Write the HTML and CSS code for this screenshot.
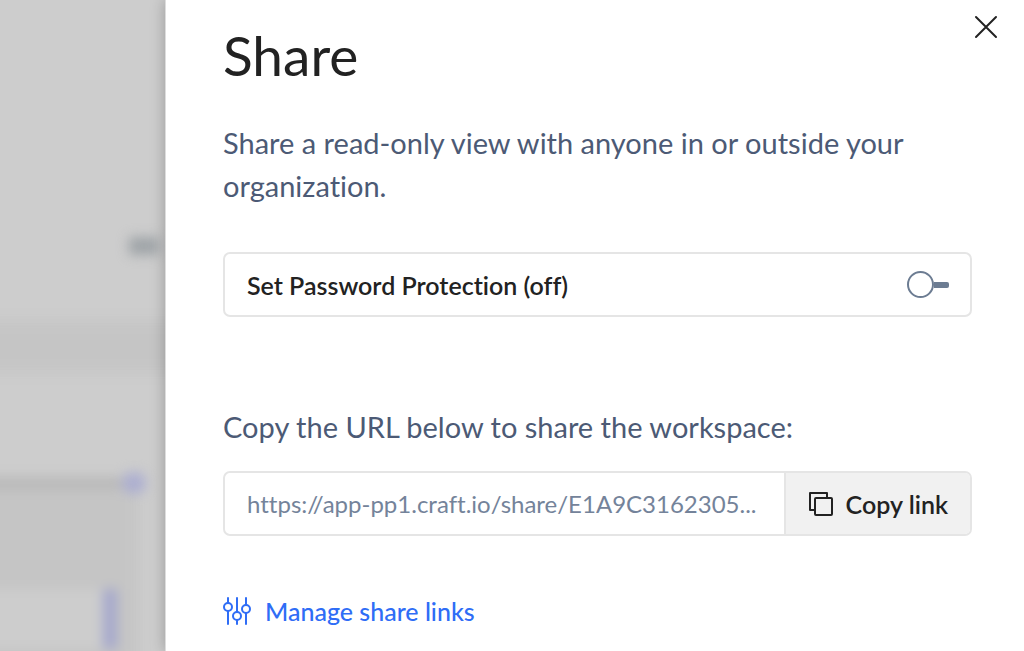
FILE: index.html
```html
<!DOCTYPE html>
<html lang="en">
<head>
    <meta charset="UTF-8">
    <meta name="viewport" content="width=device-width, initial-scale=1.0">
    <title>Share</title>
    <link rel="stylesheet" href="styles.css">
</head>
<body>
    <div class="layout">
        <div class="backdrop" aria-hidden="true">
            <div class="workspace">
                <div class="toolbar"><span class="chip"></span></div>
                <div class="band"></div>
                <div class="blank"></div>
                <div class="slider"><span class="track"></span><span class="knob"></span></div>
                <div class="board">
                    <div class="card"></div>
                </div>
            </div>
        </div>

        <main class="panel">
            <button class="close" type="button" aria-label="Close">
                <svg width="24" height="24" viewBox="0 0 24 24" fill="none" stroke="#222" stroke-width="2" stroke-linecap="round">
                    <path d="M2 2l20 20M22 2L2 22"/>
                </svg>
            </button>
            <h1>Share</h1>
            <p class="intro">Share a read-only view with anyone in or outside your organization.</p>

            <div class="box password">
                <label for="password">Set Password Protection (off)</label>
                <input type="checkbox" id="password" class="switch">
            </div>

            <label class="url-label" for="shareUrl">Copy the URL below to share the workspace:</label>
            <div class="box url-row">
                <input type="text" id="shareUrl" value="https://app-pp1.craft.io/share/E1A9C3162305..." readonly>
                <button class="copy" type="button">
                    <svg width="24" height="24" viewBox="0 0 24 24" fill="none" stroke="#222" stroke-width="2" stroke-linejoin="round">
                        <path d="M6 18H1V1h17v5"/>
                        <rect x="6" y="6" width="17" height="17" rx="1"/>
                    </svg>
                    Copy link
                </button>
            </div>

            <a class="manage" href="#">
                <svg width="28" height="28" viewBox="0 0 28 28" fill="none" stroke="#2f6df6" stroke-width="2" stroke-linecap="round">
                    <path d="M5 1v5M5 14v13M14 1v14M14 23v4M23 1v7M23 16v11"/>
                    <circle cx="5" cy="10" r="4"/>
                    <circle cx="14" cy="19" r="4"/>
                    <circle cx="23" cy="12" r="4"/>
                </svg>
                Manage share links
            </a>
        </main>
    </div>
</body>
</html>
```
FILE: styles.css
```css
*, *::before, *::after {
    box-sizing: border-box;
}
body {
    margin: 0;
    font-family: Lato, "Open Sans", sans-serif;
    font-size: 25px;
    font-variant-ligatures: none;
    color: #222;
}
.layout {
    display: flex;
    min-height: 100vh;
}

/* blurred workspace behind the drawer */
.backdrop {
    display: flex;
    width: 165px;
    background: #cdcdcd;
    overflow: hidden;
}
.workspace {
    display: flex;
    flex-direction: column;
    flex: 1;
    filter: blur(6px);
}
.toolbar {
    display: flex;
    justify-content: flex-end;
    align-items: flex-end;
    height: 321px;
    padding: 0 6px 66px 0;
}
.chip {
    width: 30px;
    height: 18px;
    background: #9fa4a8;
}
.band {
    height: 51px;
    margin: 0 -20px;
    background: #c5c5c5;
}
.blank {
    height: 99px;
}
.slider {
    display: flex;
    align-items: center;
    height: 24px;
    margin-left: -20px;
    z-index: 1;
}
.track {
    width: 142px;
    height: 13px;
    background: #b9b9b9;
}
.knob {
    width: 24px;
    height: 22px;
    border-radius: 10px;
    background: #adafd0;
}
.board {
    flex: 1;
    margin: -6px 27px -20px -20px;
    padding: 100px 21px 22px 0;
    background: #c5c5c5;
}
.card {
    height: 100%;
    border-right: 14px solid #a5a8cc;
    background: #cdcdcd;
}
.slider {
    position: relative;
}

/* share drawer */
.panel {
    position: relative;
    flex: 1;
    padding: 23px 52px 0 57px;
    background: #fff;
    border-left: 1px solid #ddd;
    box-shadow: 0 0 14px rgba(0, 0, 0, 0.25);
}
.close {
    position: absolute;
    top: 15px;
    right: 26px;
    display: flex;
    padding: 0;
    border: 0;
    background: none;
}
h1 {
    margin: 0 0 34px;
    font-size: 55px;
    line-height: 64px;
    font-weight: 400;
}
.intro, .url-label {
    display: block;
    margin: 0;
    font-size: 29px;
    line-height: 43px;
    color: #4c5a75;
}
.box {
    display: flex;
    align-items: center;
    height: 65px;
    border: 2px solid #e5e5e5;
    border-radius: 7px;
}
.password {
    justify-content: space-between;
    margin: 45px 0 88px;
    padding: 0 21px 0 22px;
    font-weight: 600;
}
.switch {
    appearance: none;
    display: flex;
    align-items: center;
    width: 42px;
    height: 27px;
    margin: 0;
}
.switch::before {
    content: "";
    width: 27px;
    height: 27px;
    border: 2px solid #6c7c92;
    border-radius: 50%;
}
.switch::after {
    content: "";
    flex: 1;
    height: 6px;
    border-radius: 0 2px 2px 0;
    background: #6c7c92;
}
.url-row {
    align-items: stretch;
    margin: 23px 0 53px;
}
.url-row input {
    flex: 1;
    min-width: 0;
    padding: 0 10px 0 22px;
    border: 0;
    border-radius: 7px;
    font: inherit;
    font-size: 24px;
    color: #74839a;
}
.copy {
    display: flex;
    align-items: center;
    gap: 13px;
    padding: 0 22px 0 23px;
    border: 0;
    border-left: 2px solid #e5e5e5;
    border-radius: 0 5px 5px 0;
    background: #f1f1f1;
    font: inherit;
    font-weight: 600;
    color: #222;
}
.manage {
    display: inline-flex;
    align-items: center;
    gap: 14px;
    line-height: 44px;
    font-weight: 500;
    color: #2f6df6;
    text-decoration: none;
}
```
